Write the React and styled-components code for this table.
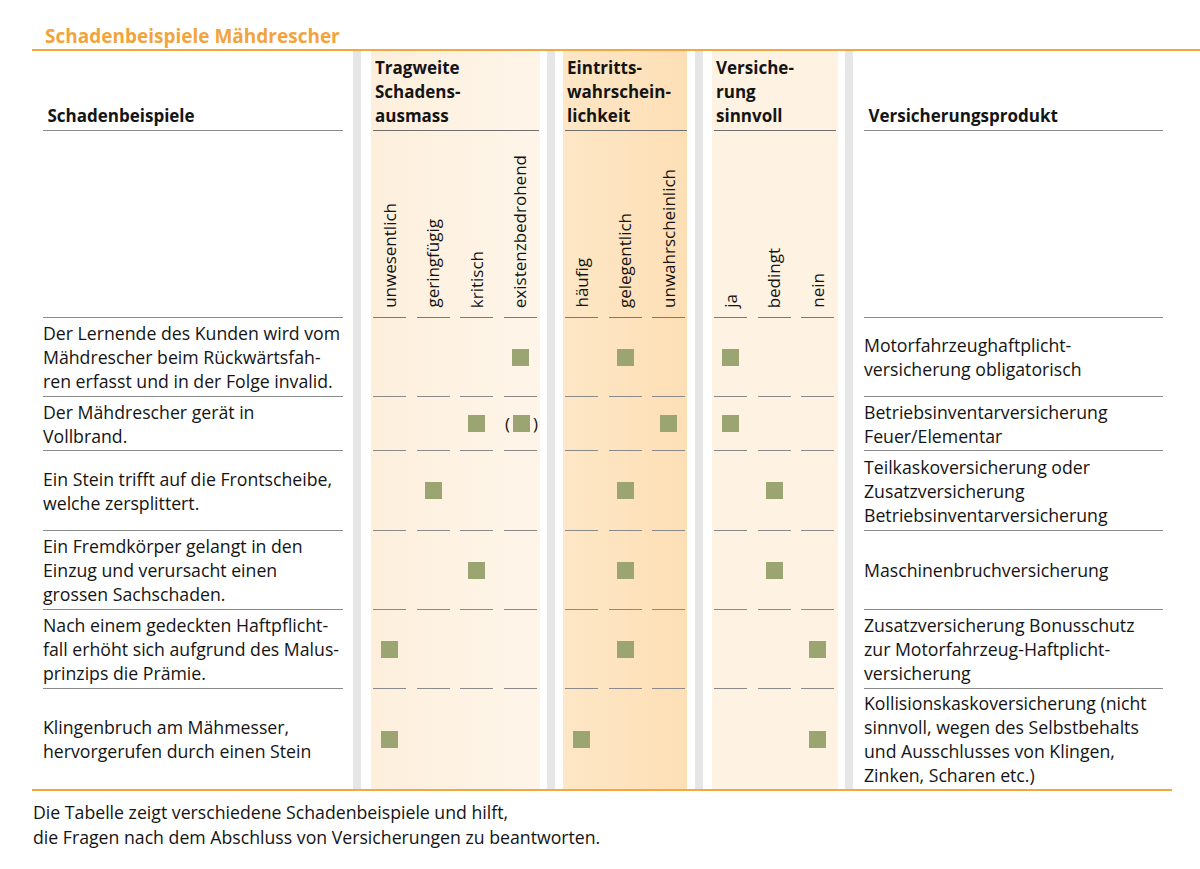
import React from 'react';
import styled, {createGlobalStyle, css} from "styled-components";

const GlobalStyle = createGlobalStyle`
  html, body {
    margin: 0;
    padding: 0;
    background: #ffffff;
  }
  body {
    font-family: "Open Sans", "Noto Sans", sans-serif;
    color: #141414;
  }
`

const Page = styled.div`
  padding: 24px 0 0 32px;
  width: 1168px;
`

const Title = styled.h1`
  margin: 0;
  padding: 0 0 1px 13px;
  font-size: 19px;
  line-height: 24px;
  font-weight: 700;
  color: #f2a43c;
  border-bottom: 2px solid #f4a73f;
`

const Table = styled.div`
  width: 1140px;
  display: flex;
  flex-direction: column;
  border-bottom: 2px solid #f4a73f;
`

const Row = styled.div`
  display: flex;
  height: ${p => p.$h}px;
`

const TextCell = styled.div`
  box-sizing: border-box;
  width: ${p => p.$w}px;
  padding: ${p => p.$pad};
  display: flex;
`

const TextInner = styled.div`
  flex: 1;
  display: flex;
  align-items: ${p => p.$align || 'center'};
  font-size: ${p => p.$bold ? '17px' : '17.7px'};
  line-height: 24px;
  white-space: nowrap;
  font-weight: ${p => p.$bold ? 700 : 400};
  border-bottom: ${p => p.$line ? '1px solid #8a8a8a' : 'none'};
  padding-bottom: ${p => p.$align === 'flex-end' ? '2px' : '0'};
`

const Sep = styled.div`
  width: 8px;
  flex: none;
  background: #e6e6e6;
`

const Group = styled.div`
  box-sizing: border-box;
  flex: none;
  display: flex;
  width: ${p => p.$w}px;
  padding: 0 ${p => p.$pr}px 0 ${p => p.$pl}px;
`

const tones = {
    light: css`background: linear-gradient(90deg, #fdefdc 0%, #fef5e9 100%);`,
    strong: css`background: linear-gradient(90deg, #fde7c6 0%, #fddfb6 100%);`,
    pale: css`background: #fef2e2;`,
}

const Panel = styled.div`
  flex: 1;
  box-sizing: border-box;
  padding-left: 2px;
  display: flex;
  ${p => tones[p.$tone]}
`

const GroupHead = styled.div`
  width: ${p => p.$w}px;
  display: flex;
  align-items: flex-end;
  font-size: 17px;
  line-height: 24px;
  font-weight: 700;
  white-space: nowrap;
  padding-left: 2px;
  padding-bottom: 2px;
  border-bottom: 1px solid #6f6f6f;
`

const SubGrid = styled.div`
  display: grid;
  grid-template-columns: repeat(${p => p.$n}, 33px);
  column-gap: 10.5px;
  height: 100%;
`

const LabelCell = styled.div`
  display: flex;
  flex-direction: column;
  justify-content: flex-end;
  align-items: center;
  padding-bottom: 9px;
  border-bottom: 1px solid #7a7a7a;
`

const Vertical = styled.span`
  writing-mode: vertical-rl;
  transform: rotate(180deg);
  font-size: 17px;
  line-height: 24px;
  white-space: nowrap;
`

const MarkCell = styled.div`
  display: flex;
  align-items: center;
  justify-content: center;
  border-bottom: ${p => p.$line ? '1px solid #8a8a8a' : 'none'};
`

const Square = styled.span`
  flex: none;
  width: 17px;
  height: 17px;
  background: #9aa571;
  display: block;
`

const Paren = styled.span`
  display: inline-flex;
  align-items: center;
  font-size: 17px;
  line-height: 20px;
  gap: 3px;
  margin-left: 3px;
`

const Caption = styled.p`
  margin: 9px 0 0 1px;
  font-size: 17.7px;
  line-height: 25px;
`

const LEFT_W = 321;
const RIGHT_W = 319;

const groups = [
    {
        key: 't', w: 186, pl: 10, pr: 7, tone: 'light', headW: 164,
        head: ['Tragweite', 'Schadens-', 'ausmass'],
        labels: ['unwesentlich', 'geringfügig', 'kritisch', 'existenzbedrohend'],
    },
    {
        key: 'e', w: 140, pl: 8, pr: 8, tone: 'strong', headW: 120,
        head: ['Eintritts-', 'wahrschein-', 'lichkeit'],
        labels: ['häufig', 'gelegentlich', 'unwahrscheinlich'],
    },
    {
        key: 'v', w: 142, pl: 9, pr: 7, tone: 'pale', headW: 120,
        head: ['Versiche-', 'rung', 'sinnvoll'],
        labels: ['ja', 'bedingt', 'nein'],
    },
]

// marks per row: [tragweite, eintritt, versicherung]; 'p' = in Klammern
const rows = [
    {
        h: 79,
        text: ['Der Lernende des Kunden wird vom', 'Mähdrescher beim Rückwärtsfah-', 'ren erfasst und in der Folge invalid.'],
        product: ['Motorfahrzeughaftplicht-', 'versicherung obligatorisch'],
        marks: [{3: 'x'}, {1: 'x'}, {0: 'x'}],
    },
    {
        h: 54,
        text: ['Der Mähdrescher gerät in', 'Vollbrand.'],
        product: ['Betriebsinventarversicherung', 'Feuer/Elementar'],
        marks: [{2: 'x', 3: 'p'}, {2: 'x'}, {0: 'x'}],
    },
    {
        h: 80,
        text: ['Ein Stein trifft auf die Frontscheibe,', 'welche zersplittert.'],
        product: ['Teilkaskoversicherung oder', 'Zusatzversicherung', 'Betriebsinventarversicherung'],
        marks: [{1: 'x'}, {1: 'x'}, {1: 'x'}],
    },
    {
        h: 79,
        text: ['Ein Fremdkörper gelangt in den', 'Einzug und verursacht einen', 'grossen Sachschaden.'],
        product: ['Maschinenbruchversicherung'],
        marks: [{2: 'x'}, {1: 'x'}, {1: 'x'}],
    },
    {
        h: 79,
        text: ['Nach einem gedeckten Haftpflicht-', 'fall erhöht sich aufgrund des Malus-', 'prinzips die Prämie.'],
        product: ['Zusatzversicherung Bonusschutz', 'zur Motorfahrzeug-Haftplicht-', 'versicherung'],
        marks: [{0: 'x'}, {1: 'x'}, {2: 'x'}],
    },
    {
        h: 100,
        text: ['Klingenbruch am Mähmesser,', 'hervorgerufen durch einen Stein'],
        product: ['Kollisionskaskoversicherung (nicht', 'sinnvoll, wegen des Selbstbehalts', 'und Ausschlusses von Klingen,', 'Zinken, Scharen etc.)'],
        marks: [{0: 'x'}, {0: 'x'}, {2: 'x'}],
    },
]

const Lines = ({lines}) => (
    <div>
        {lines.map((l, i) => <div key={i}>{l}</div>)}
    </div>
)

const Mark = ({type}) => {
    if (type === 'p') {
        return <Paren><span>(</span><Square/><span>)</span></Paren>;
    }
    if (type === 'x') return <Square/>;
    return null;
}

const GroupCells = ({children}) => (
    groups.map((g, gi) => (
        <React.Fragment key={g.key}>
            <Sep/>
            <Group $w={g.w} $pl={g.pl} $pr={g.pr}>
                <Panel $tone={g.tone}>{children(g, gi)}</Panel>
            </Group>
        </React.Fragment>
    ))
)

const App = () => {
    return (
        <Page>
            <GlobalStyle/>
            <Title>Schadenbeispiele Mähdrescher</Title>
            <Table>
                <Row $h={80}>
                    <TextCell $w={LEFT_W} $pad="0 10px 0 11px">
                        <TextInner $bold $line $align="flex-end"><span>&nbsp;Schadenbeispiele</span></TextInner>
                    </TextCell>
                    <GroupCells>
                        {g => <GroupHead $w={g.headW}><Lines lines={g.head}/></GroupHead>}
                    </GroupCells>
                    <Sep/>
                    <TextCell $w={RIGHT_W} $pad="0 9px 0 11px">
                        <TextInner $bold $line $align="flex-end"><span>&nbsp;Versicherungsprodukt</span></TextInner>
                    </TextCell>
                </Row>
                <Row $h={187}>
                    <TextCell $w={LEFT_W} $pad="0 10px 0 11px">
                        <TextInner $line/>
                    </TextCell>
                    <GroupCells>
                        {g => (
                            <SubGrid $n={g.labels.length}>
                                {g.labels.map(l => (
                                    <LabelCell key={l}><Vertical>{l}</Vertical></LabelCell>
                                ))}
                            </SubGrid>
                        )}
                    </GroupCells>
                    <Sep/>
                    <TextCell $w={RIGHT_W} $pad="0 9px 0 11px">
                        <TextInner $line/>
                    </TextCell>
                </Row>
                {rows.map((r, ri) => {
                    const line = ri < rows.length - 1;
                    return (
                        <Row key={ri} $h={r.h}>
                            <TextCell $w={LEFT_W} $pad="0 10px 0 11px">
                                <TextInner $line={line}><Lines lines={r.text}/></TextInner>
                            </TextCell>
                            <GroupCells>
                                {(g, gi) => (
                                    <SubGrid $n={g.labels.length}>
                                        {g.labels.map((l, li) => (
                                            <MarkCell key={l} $line={line}>
                                                <Mark type={r.marks[gi][li]}/>
                                            </MarkCell>
                                        ))}
                                    </SubGrid>
                                )}
                            </GroupCells>
                            <Sep/>
                            <TextCell $w={RIGHT_W} $pad="0 9px 0 11px">
                                <TextInner $line={line}><Lines lines={r.product}/></TextInner>
                            </TextCell>
                        </Row>
                    )
                })}
            </Table>
            <Caption>
                Die Tabelle zeigt verschiedene Schadenbeispiele und hilft,<br/>
                die Fragen nach dem Abschluss von Versicherungen zu beantworten.
            </Caption>
        </Page>
    );
};

export default App;
